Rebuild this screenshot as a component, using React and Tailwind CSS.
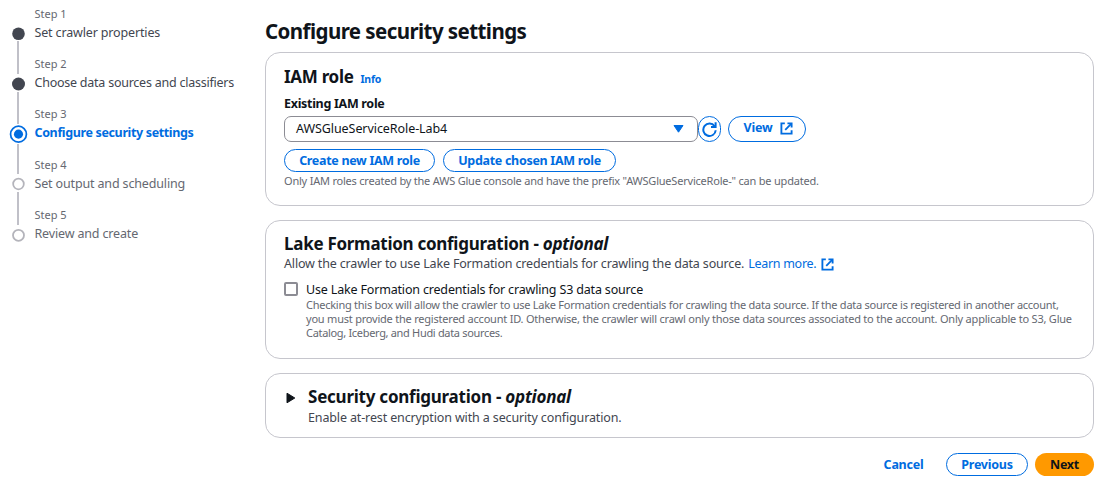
import React from "react";

const steps = [
  { title: "Set crawler properties", state: "done", cls: "text-[#424650] tracking-[-0.15px]", line: "-mt-[2px] h-[34px]" },
  { title: "Choose data sources and classifiers", state: "done", cls: "text-[#424650] tracking-[-0.24px]", line: "-mt-[2px] h-[32px]" },
  { title: "Configure security settings", state: "current", cls: "text-[#006ce0] font-bold tracking-[-0.36px]", line: "mt-px h-[31px]" },
  { title: "Set output and scheduling", state: "todo", cls: "text-[#656871] tracking-[-0.15px]", line: "-mt-[2px] h-[34px]" },
  { title: "Review and create", state: "todo", cls: "text-[#656871] tracking-[-0.16px]", line: "" },
];

function Marker({ state }) {
  if (state === "done") {
    return (
      <svg className="block size-5" viewBox="0 0 20 20">
        <circle cx="10.5" cy="10" r="6.5" fill="#424650" />
      </svg>
    );
  }
  if (state === "current") {
    return (
      <svg className="block size-5" viewBox="0 0 20 20" fill="none">
        <circle cx="10.5" cy="10.5" r="8.2" stroke="#006ce0" strokeWidth="1.8" />
        <circle cx="10.5" cy="10.5" r="4.7" fill="#006ce0" />
      </svg>
    );
  }
  return (
    <svg className="block size-5" viewBox="0 0 20 20" fill="none">
      <circle cx="10.5" cy="10.3" r="5.5" stroke="#b4b4bb" strokeWidth="1.8" />
    </svg>
  );
}

function External({ className }) {
  return (
    <svg className={className} viewBox="0 0 14 14" fill="none" stroke="currentColor" strokeWidth="2">
      <path d="M5.2 1.5H1.5V12.5H12.5V9" />
      <path d="M8 1.5H12.5V6" />
      <path d="M12.3 1.7L5.6 8.4" />
    </svg>
  );
}

function Button({ className, children }) {
  return (
    <button
      className={`flex items-center justify-center whitespace-nowrap rounded-full border text-[12.5px] font-bold leading-none text-[#006ce0] ${className}`}
    >
      {children}
    </button>
  );
}

export default function App() {
  return (
    <div className="flex h-[499px] w-[1103px] overflow-hidden bg-white font-['Noto_Sans',sans-serif] text-[12.5px] text-[#0f141a]">
      <nav className="flex w-[265px] shrink-0 pl-2">
        <div className="flex w-5 flex-col items-center pt-[23.5px]">
          {steps.map((s, i) => (
            <div key={s.title} className="flex h-[50.3px] flex-col items-center">
              <Marker state={s.state} />
              {i < 4 && <div className={`w-[2px] bg-[#c0c0c8] ${s.line}`} />}
            </div>
          ))}
        </div>
        <ol className="pl-[6.5px] pt-[5.9px]">
          {steps.map((s, i) => (
            <li key={s.title} className="h-[50.25px] whitespace-nowrap">
              <div className="text-[11px] leading-[16px] text-[#656871]">Step {i + 1}</div>
              <div className={`mt-px leading-[19px] ${s.cls}`}>{s.title}</div>
            </li>
          ))}
        </ol>
      </nav>

      <main className="flex w-[829px] flex-col whitespace-nowrap">
        <h1 className="pt-[17px] text-[20.5px] font-bold leading-[28px] tracking-[-0.57px]">Configure security settings</h1>

        <section className="mt-[7px] h-[154px] rounded-[15px] border border-[#c6c6cd] px-[18px] pt-[13px]">
          <div className="flex items-baseline gap-[7px] leading-[22px]">
            <h2 className="text-[17px] font-bold tracking-[-0.3px]">IAM role</h2>
            <a className="text-[10.5px] font-bold tracking-[-0.25px] text-[#006ce0]">Info</a>
          </div>
          <div className="mt-[5px] leading-[18px] font-bold tracking-[-0.3px]">Existing IAM role</div>
          <div className="mt-[3px] flex">
            <div className="flex h-[26px] w-[414px] items-center justify-between rounded-[7px] border border-[#8c8c94] pl-[11px] pr-[13px]">
              <span className="tracking-[-0.07px]">AWSGlueServiceRole-Lab4</span>
              <svg className="h-2 w-[11px]" viewBox="0 0 11 8">
                <path d="M1 .5H10L5.5 7.2Z" fill="#006ce0" stroke="#006ce0" strokeLinejoin="round" />
              </svg>
            </div>
            <Button className="h-[26px] w-[23px] border-[#006ce0]">
              <svg className="size-[15px] shrink-0" viewBox="0 0 15 15" fill="none" stroke="currentColor" strokeWidth="2">
                <path d="M13.7 8.2A6.2 6.2 0 1 1 12.6 4.2" />
                <path d="M13.6 .3V5H9" />
              </svg>
            </Button>
            <Button className="ml-[7px] h-[26px] w-[78px] gap-2 border-[#006ce0] pl-[3px]">
              <span className="-mt-px tracking-[-0.2px]">View</span>
              <External className="-mt-px size-[13px]" />
            </Button>
          </div>
          <div className="mt-[7px] flex gap-2">
            <Button className="h-[23px] w-[151px] border-[#006ce0] pt-px tracking-[-0.31px]">Create new IAM role</Button>
            <Button className="h-[23px] w-[173px] border-[#006ce0] pt-px tracking-[-0.3px]">Update chosen IAM role</Button>
          </div>
          <p className="mt-px text-[11px] leading-[16px] tracking-[-0.21px] text-[#656871]">
            Only IAM roles created by the AWS Glue console and have the prefix "AWSGlueServiceRole-" can be updated.
          </p>
        </section>

        <section className="mt-[14px] h-[139px] rounded-[15px] border border-[#c6c6cd] px-[18px] pt-[12px]">
          <h2 className="text-[17px] font-bold leading-[22px] tracking-[-0.28px]">
            Lake Formation configuration - <i>optional</i>
          </h2>
          <div className="flex items-center leading-[18px]">
            <span className="tracking-[-0.16px] text-[#424650]">Allow the crawler to use Lake Formation credentials for crawling the data source.</span>
            <a className="ml-1 flex items-center gap-[5px] tracking-[-0.3px] text-[#006ce0]">
              Learn more.
              <External className="size-[13px]" />
            </a>
          </div>
          <div className="mt-[7px] flex gap-2">
            <div className="mt-[2px] size-[14px] shrink-0 rounded-[2px] border-2 border-[#8c8c94]" />
            <div>
              <div className="pt-px leading-[17px] tracking-[-0.17px]">Use Lake Formation credentials for crawling S3 data source</div>
              <div className="text-[11px] leading-[14px] text-[#656871]">
                <p className="tracking-[-0.257px]">
                  Checking this box will allow the crawler to use Lake Formation credentials for crawling the data source. If the data source is registered in another account,
                </p>
                <p className="tracking-[-0.215px]">
                  you must provide the registered account ID. Otherwise, the crawler will crawl only those data sources associated to the account. Only applicable to S3, Glue
                </p>
                <p className="tracking-[-0.32px]">Catalog, Iceberg, and Hudi data sources.</p>
              </div>
            </div>
          </div>
        </section>

        <section className="mt-[14px] flex h-[65px] rounded-[15px] border border-[#c6c6cd] pl-[20px] pt-[12px]">
          <svg className="mt-[6px] h-3 w-[10px]" viewBox="0 0 10 12">
            <path d="M1 1.2V10.8L8.8 6Z" fill="#0f141a" stroke="#0f141a" strokeLinejoin="round" />
          </svg>
          <div className="ml-[12px]">
            <h2 className="text-[17px] font-bold leading-[22px] tracking-[-0.24px]">
              Security configuration - <i>optional</i>
            </h2>
            <p className="leading-[19px] tracking-[-0.135px] text-[#424650]">Enable at-rest encryption with a security configuration.</p>
          </div>
        </section>

        <div className="mt-[15px] flex justify-end">
          <Button className="mr-[7px] h-[23px] w-[71px] border-transparent pt-px tracking-[-0.25px]">Cancel</Button>
          <Button className="h-[23px] w-[82px] border-[#006ce0] pt-px tracking-[-0.25px]">Previous</Button>
          <button className="ml-[7px] h-[23px] w-[59px] rounded-full bg-[#ff9900] pt-px text-[12.5px] font-bold leading-none tracking-[-0.25px]">Next</button>
        </div>
      </main>
    </div>
  );
}
